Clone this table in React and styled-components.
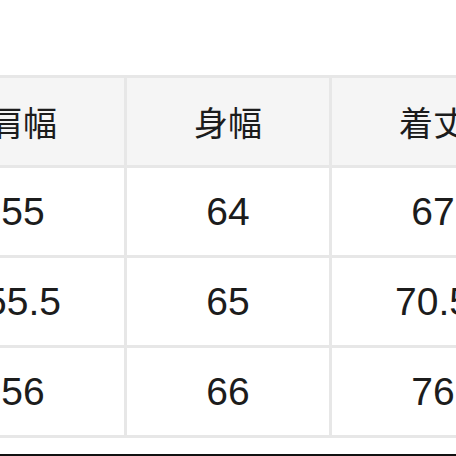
import React from 'react';
import styled, { createGlobalStyle } from 'styled-components';

const GlobalStyle = createGlobalStyle`
  html, body {
    margin: 0;
    padding: 0;
    background: #ffffff;
  }
`;

const Page = styled.div`
  width: 456px;
  height: 456px;
  box-sizing: border-box;
  overflow: hidden;
  padding-top: 75px;
  border-bottom: 2px solid #111111;
  background: #ffffff;
`;

const SizeGrid = styled.div`
  display: grid;
  grid-template-columns: repeat(3, 202px);
  grid-auto-rows: 87px;
  gap: 3px;
  width: max-content;
  margin-left: -81px;
  border: 3px solid #e7e7e7;
  background: #e7e7e7;
`;

const Cell = styled.div`
  display: flex;
  align-items: center;
  justify-content: center;
  background: ${(props) => (props.$head ? '#f5f5f5' : '#ffffff')};
  color: #1c1c1c;
  font-family: 'Liberation Sans', 'Noto Sans CJK JP', Arial, sans-serif;
  font-size: ${(props) => (props.$head ? '34px' : '39px')};
  white-space: nowrap;
`;

export default function App() {
  const head = ['肩幅', '身幅', '着丈'];
  const rows = [
    ['55', '64', '67'],
    ['55.5', '65', '70.5'],
    ['56', '66', '76'],
  ];

  return (
    <>
      <GlobalStyle />
      <Page>
        <SizeGrid>
          {head.map((h) => (
            <Cell key={h} $head>
              {h}
            </Cell>
          ))}
          {rows.map((row, idx) =>
            row.map((v, i) => <Cell key={idx + '-' + i}>{v}</Cell>)
          )}
        </SizeGrid>
      </Page>
    </>
  );
}
